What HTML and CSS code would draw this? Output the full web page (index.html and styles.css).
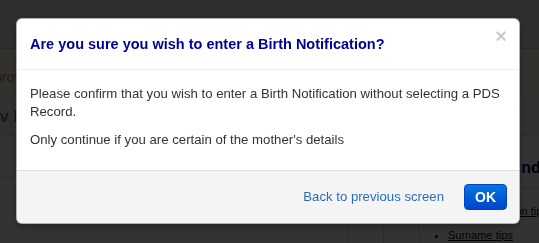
FILE: index.html
```html
<!DOCTYPE html>
<html lang="en">
<head>
  <meta charset="UTF-8">
  <meta name="viewport" content="width=device-width, initial-scale=1.0">
  <title>Birth Notification</title>
  <link rel="stylesheet" href="styles.css">
</head>
<body>
  <div class="page">
    <div class="topbar"></div>
    <div class="notice"><span>prov</span></div>
    <div class="tabs"><span class="tab">v N</span></div>
    <div class="main">
      <div class="grid">
        <div class="grid-row"></div>
        <div class="cols">
          <div class="col"></div>
          <div class="col"></div>
        </div>
      </div>
      <div class="side">
        <div class="side-title">Find</div>
        <ul class="tips">
          <li class="tip-first"><a href="#">Registration tips</a></li>
          <li><a href="#">Surname tips</a></li>
        </ul>
      </div>
    </div>
  </div>

  <div class="backdrop"></div>

  <div class="modal">
    <div class="modal-header">
      <button class="close" type="button">&times;</button>
      <h3>Are you sure you wish to enter a Birth Notification?</h3>
    </div>
    <div class="modal-body">
      <p>Please confirm that you wish to enter a Birth Notification without selecting a PDS Record.</p>
      <p>Only continue if you are certain of the mother's details</p>
    </div>
    <div class="modal-footer">
      <a href="#" class="back-link">Back to previous screen</a>
      <button class="btn btn-primary" type="button">OK</button>
    </div>
  </div>
</body>
</html>
```

FILE: styles.css
```css
* {
  box-sizing: border-box;
  margin: 0;
  padding: 0;
}

body {
  width: 539px;
  height: 243px;
  overflow: hidden;
  font-family: Arial, "Liberation Sans", Helvetica, sans-serif;
  font-size: 13.2px;
  line-height: 18px;
  color: #333;
  background: #fff;
}

/* page behind the dialog */

.page {
  height: 243px;
  overflow: hidden;
}

.topbar {
  height: 48px;
  background: #e4e4e4;
}

.notice {
  height: 52px;
  padding-top: 19px;
  background: #fff3e2;
  color: #8a8a8a;
  font-size: 14px;
  border-top: 1px solid #d8d0c0;
}

.notice span {
  margin-left: -6px;
}

.tabs {
  height: 35px;
  padding-top: 8px;
  background: #e6f0f8;
}

.tab {
  font-size: 17px;
  color: #555;
}

.main {
  display: flex;
  height: 108px;
  border-top: 1px solid #d6d6d6;
}

.grid {
  flex: 1;
  display: flex;
  flex-direction: column;
  justify-content: space-between;
}

.grid-row {
  height: 42px;
  border-bottom: 1px solid #dadada;
}

.cols {
  display: flex;
  justify-content: flex-end;
  height: 36px;
}

.col {
  width: 36px;
  border-left: 1px solid #e2e2e2;
}

.col + .col {
  width: 35px;
}

.side {
  width: 121px;
  border-left: 1px solid #e2e2e2;
}

.side-title {
  width: 140px;
  margin-top: 22px;
  padding-left: 88px;
  padding-bottom: 10px;
  font-size: 16px;
  line-height: 20px;
  font-weight: bold;
  color: #000033;
  border-bottom: 1px solid #cfcfcf;
}

.tips {
  list-style: disc;
  padding-left: 29px;
  margin-top: 10px;
  white-space: nowrap;
}

.tips li {
  font-size: 11px;
  line-height: 24px;
  color: #000;
}

.tips a {
  color: #000;
  text-decoration: underline;
}

.tip-first {
  padding-left: 21px;
}

.backdrop {
  position: fixed;
  inset: 0;
  background: #000;
  opacity: 0.8;
}

/* dialog */

.modal {
  position: fixed;
  top: 18px;
  left: 16px;
  width: 504px;
  background: #fff;
  border: 1px solid rgba(0,0,0,0.3);
  border-radius: 6px;
  box-shadow: 0 3px 7px rgba(0,0,0,0.3);
  overflow: hidden;
}

.modal-header {
  padding: 15px 14px 15px 13px;
  border-bottom: 1px solid #eee;
}

.modal-header h3 {
  font-size: 14.5px;
  line-height: 20px;
  font-weight: bold;
  color: #000099;
}

.close {
  float: right;
  margin-top: -8px;
  margin-right: -2px;
  background: none;
  border: none;
  font-family: Arial, "Liberation Sans", sans-serif;
  font-size: 20px;
  font-weight: bold;
  line-height: 20px;
  color: #000;
  opacity: 0.2;
  cursor: pointer;
}

.modal-body {
  height: 100px;
  padding: 15px 14px 15px 13px;
}

.modal-body p {
  margin-bottom: 10px;
}

.modal-footer {
  display: flex;
  justify-content: flex-end;
  align-items: center;
  gap: 20px;
  height: 53px;
  padding: 0 12px 0 15px;
  background: #f4f4f4;
  border-top: 1px solid #ddd;
}

.back-link {
  color: #2a6ebb;
  text-decoration: none;
  font-size: 13.2px;
}

.btn {
  height: 26px;
  padding: 0 10px;
  border: 1px solid #0044cc;
  border-radius: 4px;
  font-family: Arial, "Liberation Sans", sans-serif;
  font-size: 14px;
  font-weight: bold;
  color: #fff;
  cursor: pointer;
}

.btn-primary {
  background: linear-gradient(#0077dd, #0044cc);
}
```
